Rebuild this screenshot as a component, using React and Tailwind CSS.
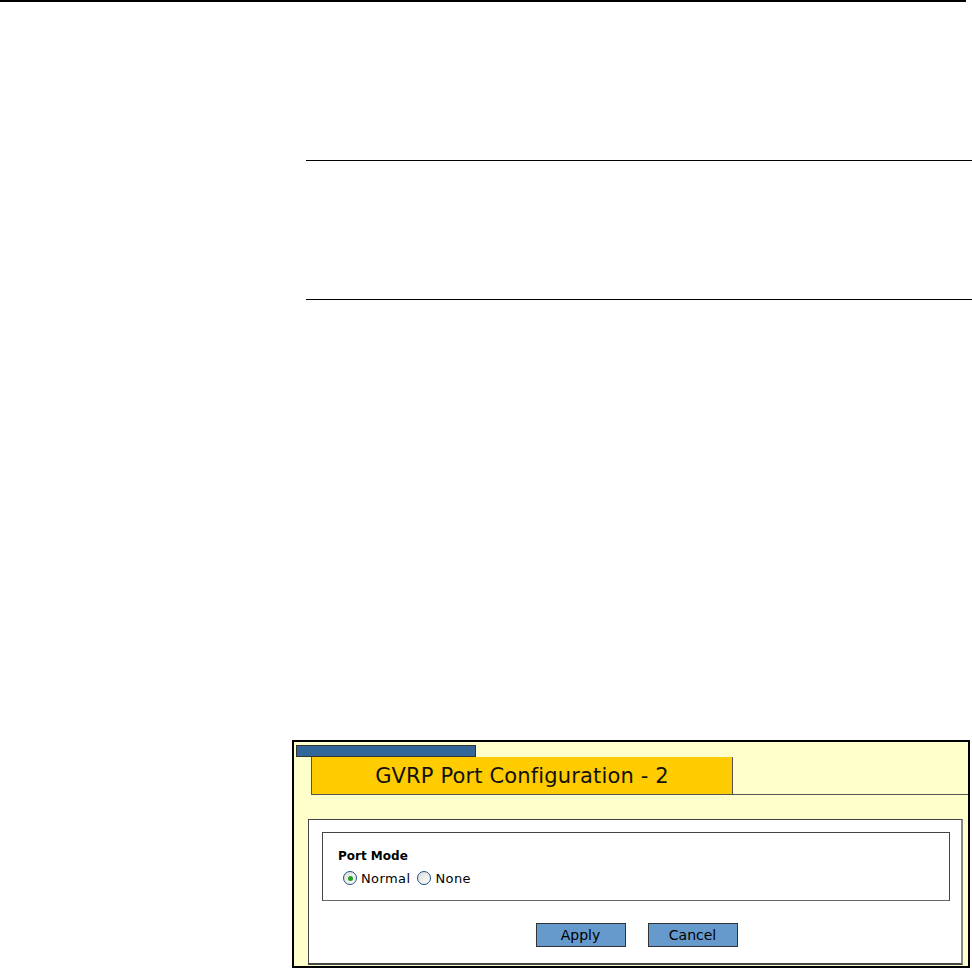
export default function App() {
  const font = { fontFamily: 'Tahoma, "DejaVu Sans", Verdana, sans-serif' };
  return (
    <div className="w-[972px] h-[969px] bg-white relative overflow-hidden" style={font}>
      <div className="w-[966px] h-[2px] bg-black" />
      <div className="ml-[306px] mt-[158px] h-[1px] w-[666px] bg-black" />
      <div className="ml-[306px] mt-[138px] h-[1px] w-[666px] bg-black" />
      <div className="ml-[292px] mt-[440px] w-[678px] h-[228px] border-2 border-black bg-[#ffffcc] flex flex-col">
        <div className="ml-[2px] mt-[3px] w-[180px] h-[12px] bg-[#336699] border border-[#333333]" />
        <div className="flex items-end">
          <div className="ml-[17px] w-[422px] h-[38px] bg-[#ffcc00] border border-[#555555] border-t-0 flex items-center justify-center text-[21px] tracking-[0.15px] text-[#111] leading-none pt-[1px]">
            GVRP Port Configuration - 2
          </div>
          <div className="flex-1 h-[1px] bg-[#555555]" />
        </div>
        <div className="ml-[14px] mt-[24px] w-[655px] h-[146px] bg-white border border-[#444444] border-b-[2px] border-r-[2px] border-r-[#888] flex flex-col">
          <div className="ml-[13px] mt-[12px] w-[628px] h-[69px] border border-[#444444] border-b-[#666] flex flex-col">
            <div className="ml-[15px] mt-[17px] text-[12px] font-bold text-black leading-none">Port Mode</div>
            <div className="ml-[20px] mt-[9px] flex items-center text-[13px] tracking-[0.4px] text-black leading-none">
              <span className="w-[14px] h-[14px] rounded-full border border-[#1c5180] bg-gradient-to-br from-[#dcdcd7] to-white flex items-center justify-center">
                <span className="w-[5px] h-[5px] rounded-full bg-[#21a121]" />
              </span>
              <span className="ml-[4px]">Normal</span>
              <span className="ml-[7px] w-[14px] h-[14px] rounded-full border border-[#1c5180] bg-gradient-to-br from-[#dcdcd7] to-white" />
              <span className="ml-[4px]">None</span>
            </div>
          </div>
          <div className="mt-[22px] flex justify-center gap-[22px] pl-[3px]">
            <div className="w-[90px] h-[24px] bg-[#6699cc] border border-[#333] flex items-center justify-center text-[14px] text-black">Apply</div>
            <div className="w-[90px] h-[24px] bg-[#6699cc] border border-[#333] flex items-center justify-center text-[14px] text-black">Cancel</div>
          </div>
        </div>
      </div>
    </div>
  );
}
